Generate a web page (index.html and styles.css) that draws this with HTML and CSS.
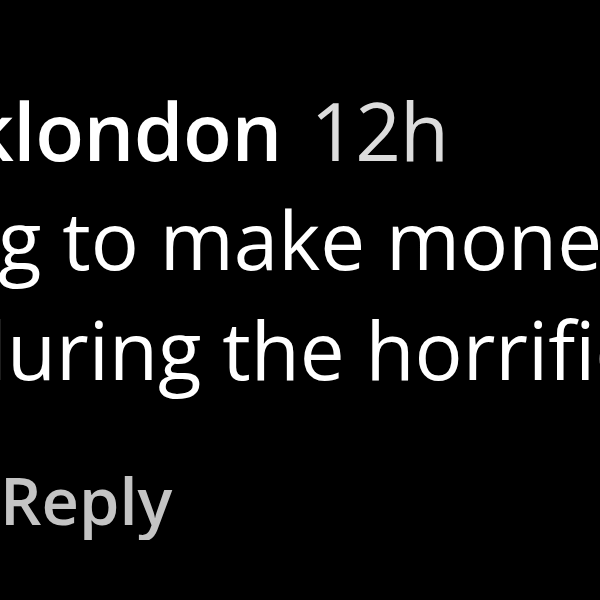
FILE: index.html
```html
<!DOCTYPE html>
<html lang="en">
<head>
  <meta charset="UTF-8" />
  <title>Comment</title>
  <link rel="stylesheet" href="styles.css">
</head>
<body>
  <div class="comment">
    <div class="meta">
      <span class="author">klondon</span>
      <span class="time">12h</span>
    </div>
    <div class="text">
      <p class="line line-2">g to make money</p>
      <p class="line line-3">during the horrific</p>
    </div>
    <div class="actions">
      <span class="reply">Reply</span>
    </div>
  </div>
</body>
</html>
```

FILE: styles.css
```css
html, body {
  margin: 0;
  height: 100%;
  background: #000;
  overflow: hidden;
}
body {
  font-family: "Open Sans", "Noto Sans", sans-serif;
  color: #fff;
}
.comment {
  padding-top: 76px;
  white-space: nowrap;
  overflow: hidden;
}
.meta {
  font-size: 80px;
  line-height: 108px;
  margin-left: -32px;
}
.author {
  font-weight: 600;
  letter-spacing: -0.5px;
}
.time {
  color: #dcdcdc;
  margin-left: 8px;
  letter-spacing: -1px;
}
.text {
  font-size: 80px;
  line-height: 110px;
}
.line {
  margin: 0;
}
.line-2 {
  margin-left: -2px;
}
.line-3 {
  margin-left: -42px;
}
.actions {
  margin-top: 56px;
  font-size: 65px;
  line-height: 80px;
}
.reply {
  color: #c4c4c4;
  font-weight: 600;
  margin-left: 0;
}
```
